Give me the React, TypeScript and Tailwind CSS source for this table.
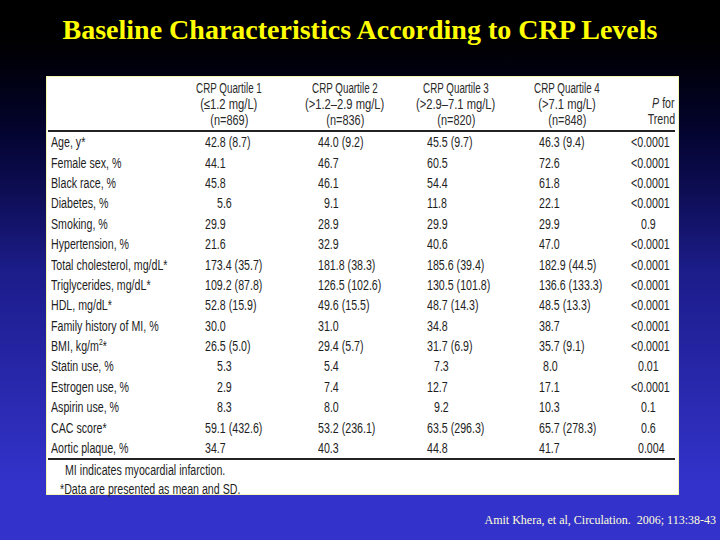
import React from "react";

type Row = { label: React.ReactNode; vals: string[] };

const rows: Row[] = [
  { label: "Age, y*", vals: ["42.8 (8.7)", "44.0 (9.2)", "45.5 (9.7)", "46.3 (9.4)", "<0.0001"] },
  { label: "Female sex, %", vals: ["44.1", "46.7", "60.5", "72.6", "<0.0001"] },
  { label: "Black race, %", vals: ["45.8", "46.1", "54.4", "61.8", "<0.0001"] },
  { label: "Diabetes, %", vals: ["5.6", "9.1", "11.8", "22.1", "<0.0001"] },
  { label: "Smoking, %", vals: ["29.9", "28.9", "29.9", "29.9", "0.9"] },
  { label: "Hypertension, %", vals: ["21.6", "32.9", "40.6", "47.0", "<0.0001"] },
  { label: "Total cholesterol, mg/dL*", vals: ["173.4 (35.7)", "181.8 (38.3)", "185.6 (39.4)", "182.9 (44.5)", "<0.0001"] },
  { label: "Triglycerides, mg/dL*", vals: ["109.2 (87.8)", "126.5 (102.6)", "130.5 (101.8)", "136.6 (133.3)", "<0.0001"] },
  { label: "HDL, mg/dL*", vals: ["52.8 (15.9)", "49.6 (15.5)", "48.7 (14.3)", "48.5 (13.3)", "<0.0001"] },
  { label: "Family history of MI, %", vals: ["30.0", "31.0", "34.8", "38.7", "<0.0001"] },
  {
    label: (
      <>
        BMI, kg/m<sup className="text-[9px] -top-[6px]">2</sup>*
      </>
    ),
    vals: ["26.5 (5.0)", "29.4 (5.7)", "31.7 (6.9)", "35.7 (9.1)", "<0.0001"],
  },
  { label: "Statin use, %", vals: ["5.3", "5.4", "7.3", "8.0", "0.01"] },
  { label: "Estrogen use, %", vals: ["2.9", "7.4", "12.7", "17.1", "<0.0001"] },
  { label: "Aspirin use, %", vals: ["8.3", "8.0", "9.2", "10.3", "0.1"] },
  { label: "CAC score*", vals: ["59.1 (432.6)", "53.2 (236.1)", "63.5 (296.3)", "65.7 (278.3)", "0.6"] },
  { label: "Aortic plaque, %", vals: ["34.7", "40.3", "44.8", "41.7", "0.004"] },
];

const colW = ["w-[112px]", "w-[110px]", "w-[112px]", "w-[91px]", "w-[53px]"];
const colPad = ["pl-[5px]", "pl-[6px]", "pl-[5px]", "pl-[5px]", "pl-[6px]"];
const singlePad = [12, 6, 7, 4];

function indentFor(col: number, v: string): number {
  if (col < 4) {
    if (/^\d\.\d$/.test(v)) return singlePad[col];
    return 0;
  }
  if (v.startsWith("<")) return 0;
  if (v === "0.01" || v === "0.004") return 7;
  return 10;
}

const font = { fontFamily: "'Liberation Sans', Arial, sans-serif" };

function N({ children, origin = "origin-left" }: { children: React.ReactNode; origin?: string }) {
  return <span className={`inline-block whitespace-nowrap scale-x-[0.76] ${origin}`}>{children}</span>;
}

function Head({ title, range, n }: { title: string; range: string; n: string }) {
  return (
    <>
      <span className="inline-block whitespace-nowrap scale-x-[0.7] origin-center">{title}</span>
      <span className="inline-block whitespace-nowrap scale-x-[0.8] origin-center">{range}</span>
      <span className="inline-block whitespace-nowrap scale-x-[0.78] origin-center">{n}</span>
    </>
  );
}

export default function App() {
  return (
    <div className="w-[720px] h-[540px] flex flex-col bg-linear-to-b from-[#000000] via-[#1c1c8a] via-50% to-[#3333cc] to-90% overflow-hidden">
      <div className="h-[76px] pt-[13px] flex justify-center">
        <h1
          className="text-[28px] leading-[34px] font-bold text-[#ffff00]"
          style={{ fontFamily: "'Liberation Serif', 'Times New Roman', serif" }}
        >
          Baseline Characteristics According to CRP Levels
        </h1>
      </div>

      <div
        className="ml-[46px] w-[633px] h-[419px] bg-white border border-[#f4f4b0] text-[#1e1e1e] text-[14px]"
        style={font}
      >
        {/* header */}
        <div className="flex h-[53px] pt-[3px] leading-[16px] text-[#2a2a2a]">
          <div className="w-[127px] shrink-0" />
          <div className="w-[110px] shrink-0 flex flex-col items-center">
            <Head title="CRP Quartile 1" range="(≤1.2 mg/L)" n="(n=869)" />
          </div>
          <div className="ml-[6px] w-[110px] shrink-0 flex flex-col items-center">
            <Head title="CRP Quartile 2" range="(>1.2–2.9 mg/L)" n="(n=836)" />
          </div>
          <div className="ml-[1px] w-[110px] shrink-0 flex flex-col items-center">
            <Head title="CRP Quartile 3" range="(>2.9–7.1 mg/L)" n="(n=820)" />
          </div>
          <div className="ml-[1px] w-[110px] shrink-0 flex flex-col items-center">
            <Head title="CRP Quartile 4" range="(>7.1 mg/L)" n="(n=848)" />
          </div>
          <div className="flex-1 flex flex-col items-end justify-end pr-[3px] pb-[3px]">
            <N origin="origin-right">
              <i>P</i> for
            </N>
            <N origin="origin-right">Trend</N>
          </div>
        </div>
        <div className="h-[2px] bg-[#222] ml-[1px] mr-[3px]" />

        {/* rows */}
        <div className="flex flex-col">
          {rows.map((r, i) => (
            <div key={i} className="flex items-center h-[20.4px] leading-[16px]">
              <div className="w-[153px] shrink-0 pl-[4px]">
                <N>{r.label}</N>
              </div>
              {r.vals.map((v, c) => (
                <div key={c} className={`${colW[c]} ${colPad[c]} shrink-0`}>
                  <span className="inline-block" style={{ paddingLeft: indentFor(c, v) }}>
                    <N>{v}</N>
                  </span>
                </div>
              ))}
            </div>
          ))}
        </div>
        <div className="h-[2px] bg-[#222] ml-[1px] mr-[3px]" />

        {/* footnotes */}
        <div className="pt-[1px] leading-[19px] flex flex-col items-start">
          <div className="pl-[18px]">
            <N>MI indicates myocardial infarction.</N>
          </div>
          <div className="pl-[13px]">
            <N>*Data are presented as mean and SD.</N>
          </div>
        </div>
      </div>

      <div className="flex-1 flex items-center justify-end pr-[4px] pt-[4px]">
        <span
          className="text-[12px] text-[#ffffd8] whitespace-pre"
          style={{ fontFamily: "'Liberation Serif', 'Times New Roman', serif" }}
        >
          Amit Khera, et al, Circulation.  2006; 113:38-43
        </span>
      </div>
    </div>
  );
}
